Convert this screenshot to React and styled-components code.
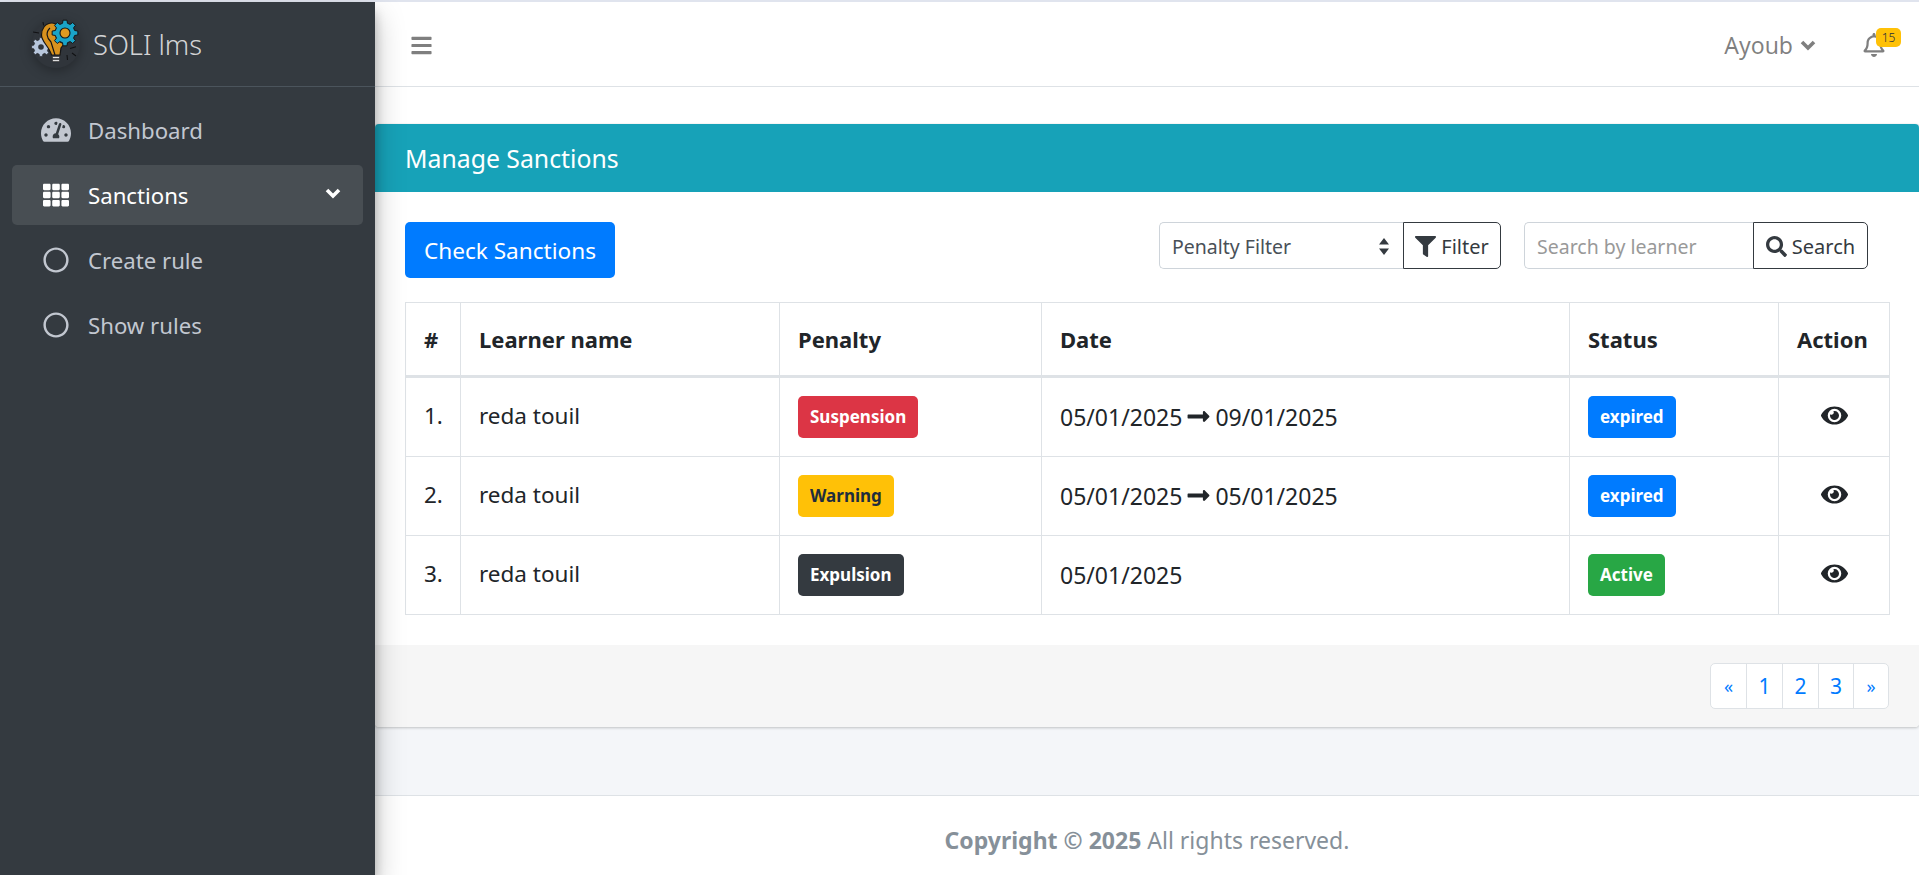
import React from 'react'
import styled, { createGlobalStyle } from 'styled-components'
import {
  FaTachometerAlt, FaTh, FaRegCircle, FaBars, FaRegBell,
  FaFilter, FaSearch, FaEye, FaLongArrowAltRight,
} from 'react-icons/fa'

const Global = createGlobalStyle`
  * { box-sizing: border-box; }
  html, body { margin: 0; padding: 0; height: 100%; }
  body {
    font-family: "Noto Sans", "Open Sans", sans-serif;
    font-size: 21px;
    color: #212529;
    background: #f4f6f9;
    overflow: hidden;
  }
`

const Shell = styled.div`
  display: flex;
  height: 875px;
  padding-top: 2px;
  background: #e0e4ee;
`
const Sidebar = styled.aside`
  width: 375px;
  flex: none;
  background: #343a40;
  box-shadow: 0 14px 28px rgba(0,0,0,.25), 0 10px 10px rgba(0,0,0,.22);
  z-index: 2;
`
const Brand = styled.div`
  height: 85px;
  display: flex;
  align-items: center;
  padding-left: 20px;
  gap: 3px;
  border-bottom: 1px solid #4b545c;
  color: rgba(255,255,255,.8);
  font-size: 27.3px;
  font-weight: 300;
`
const LogoSvg = styled.svg`
  flex: none;
  margin-top: 1px;
  filter: drop-shadow(0 3px 6px rgba(0,0,0,.3));
`
const Nav = styled.nav`
  padding: 13px 12px 0;
  display: flex;
  flex-direction: column;
  gap: 5px;
`
const NavItem = styled.div`
  height: 60px;
  display: flex;
  align-items: center;
  padding: 0 22px 0 28px;
  border-radius: 5px;
  font-size: 22.2px;
  color: ${(p) => (p.$active ? '#fff' : '#c2c7d0')};
  background: ${(p) => (p.$active ? 'rgba(255,255,255,.1)' : 'transparent')};
  svg { flex: none; }
`
const NavIcon = styled.span`
  width: 28px;
  margin: 0 18px 0 2px;
  display: flex;
  justify-content: center;
  font-size: ${(p) => p.$size || 26}px;
`
const Chevron = styled.svg`
  width: 16px;
  height: 12px;
  fill: none;
  stroke: currentColor;
  stroke-width: 3.6;
  margin-left: ${(p) => (p.$end ? 'auto' : '0')};
  margin-top: ${(p) => (p.$end ? '-4px' : '0')};
`

const Main = styled.div`
  flex: 1;
  display: flex;
  flex-direction: column;
  min-width: 0;
`
const Topbar = styled.header`
  height: 85px;
  flex: none;
  display: flex;
  align-items: center;
  background: #fff;
  border-bottom: 1px solid #dee2e6;
  padding: 2px 18px 0 35px;
  color: rgba(0,0,0,.5);
`
const Burger = styled.span`
  display: flex;
  font-size: 23px;
`
const UserMenu = styled.div`
  margin-left: auto;
  display: flex;
  align-items: center;
  gap: 7px;
  font-size: 23px;
`
const BellWrap = styled.div`
  position: relative;
  margin-left: 46px;
  width: 39px;
  height: 24px;
  font-size: 24px;
  svg { display: block; }
`
const Count = styled.span`
  position: absolute;
  top: -5px;
  left: 14px;
  width: 25px;
  height: 19px;
  border-radius: 5px;
  background: #ffc107;
  color: #1f2d3d;
  font-size: 12px;
  font-weight: 300;
  text-align: center;
  line-height: 19px;
`
const Spacer = styled.div`
  height: 37px;
  flex: none;
  background: #fff;
`
const Content = styled.main`
  flex: 1;
  background: #f4f6f9;
`
const Card = styled.section`
  background: #fff;
  border-radius: 4px;
  box-shadow: 0 0 1px rgba(0,0,0,.125), 0 1px 3px rgba(0,0,0,.2);
`
const CardHead = styled.div`
  height: 68px;
  display: flex;
  align-items: center;
  padding-left: 30px;
  background: #17a2b8;
  color: #fff;
  font-size: 24.8px;
  border-radius: 4px 4px 0 0;
`
const CardBody = styled.div`
  padding: 30px;
`
const Tools = styled.div`
  display: flex;
  align-items: flex-start;
  height: 56px;
  margin-bottom: 24px;
`
const Primary = styled.button`
  height: 56px;
  width: 210px;
  padding: 1px 0 0;
  border: 0;
  border-radius: 5px;
  background: #007bff;
  color: #fff;
  font: inherit;
  font-size: 22.6px;
`
const Group = styled.div`
  display: flex;
  height: 47px;
  margin-left: ${(p) => p.$gap || 0}px;
`
const FieldBox = styled.div`
  width: ${(p) => p.$w}px;
  display: flex;
  align-items: center;
  justify-content: space-between;
  padding: 1px 13px 0 12px;
  border: 1px solid #ced4da;
  border-right: 0;
  border-radius: 5px 0 0 5px;
  font-size: 19.5px;
  color: ${(p) => (p.$muted ? '#999' : '#495057')};
`
const Carets = styled.svg`
  width: 12px;
  height: 17px;
  fill: #343a40;
`
const OutlineBtn = styled.button`
  width: ${(p) => p.$w}px;
  display: flex;
  align-items: center;
  justify-content: center;
  gap: 5px;
  padding: 1px 0 0;
  background: #fff;
  border: 1px solid #343a40;
  border-radius: 0 5px 5px 0;
  color: #343a40;
  font: inherit;
  font-size: 20px;
  svg { font-size: 21px; }
`
const Table = styled.table`
  width: 1484px;
  table-layout: fixed;
  border-collapse: collapse;
  font-size: 22.5px;
  th, td {
    border: 1px solid #dee2e6;
    padding: 0 18px;
    text-align: left;
    vertical-align: middle;
  }
  th {
    height: 74px;
    font-size: 22px;
    font-weight: 700;
    border-bottom-width: 3px;
    color: #212529;
  }
  td { height: 79px; }
  tbody tr:first-child td { height: 80px; }
`
const Center = styled.span`
  display: flex;
  justify-content: center;
  font-size: 27px;
  margin-top: -4px;
`
const Badge = styled.span`
  display: inline-block;
  height: 42px;
  line-height: 42px;
  padding: 0 12px;
  border-radius: 5px;
  font-size: 17px;
  font-weight: 700;
  color: ${(p) => (p.$dark ? '#1f2d3d' : '#fff')};
  background: ${(p) => p.$bg};
`
const Cell = styled.span`
  display: block;
  margin-top: -3px;
`
const DateText = styled.span`
  display: inline-flex;
  align-items: center;
  gap: 4px;
  font-size: 23px;
  margin-top: -5px;
  svg { font-size: 25px; }
`
const CardFoot = styled.div`
  height: 82px;
  display: flex;
  align-items: center;
  justify-content: flex-end;
  padding: 0 30px;
  background: #f6f6f6;
  border-radius: 0 0 4px 4px;
`
const Pager = styled.div`
  display: flex;
  height: 46px;
  background: #fff;
  border: 1px solid #dee2e6;
  border-radius: 5px;
`
const PageLink = styled.a`
  width: ${(p) => p.$w}px;
  display: flex;
  align-items: center;
  justify-content: center;
  color: #007bff;
  font-size: ${(p) => (p.$arrow ? 18 : 21)}px;
  & + & { border-left: 1px solid #dee2e6; }
`
const Footer = styled.footer`
  height: 80px;
  flex: none;
  display: flex;
  align-items: center;
  justify-content: center;
  padding-top: 8px;
  background: #fff;
  border-top: 1px solid #dee2e6;
  color: #869099;
  font-size: 23px;
  b { margin-right: 6px; }
`

// cog outline, used twice in the logo
const gearPath = (cx, cy, outer, inner, teeth) => {
  const pts = []
  for (let i = 0; i < teeth; i++) {
    const a = (i / teeth) * Math.PI * 2
    const w = (Math.PI / teeth) * 0.55
    const t = w * 0.7
    pts.push([a - w * 1.15, inner], [a - t, outer], [a + t, outer], [a + w * 1.15, inner])
  }
  const d = pts.map(([a, r]) => `${(cx + r * Math.cos(a)).toFixed(2)} ${(cy + r * Math.sin(a)).toFixed(2)}`)
  return `M${d.join('L')}Z`
}

const Logo = () => (
  <LogoSvg width="70" height="70" viewBox="0 0 70 70">
    <circle cx="36" cy="34" r="24" fill="#30353b" />
    <path d={gearPath(21, 37, 9.5, 7.4, 8)} fill="#b7c6dc" stroke="#1b1d20" strokeWidth=".6" />
    <circle cx="21" cy="37" r="2.8" fill="#30353b" />
    <path d="M32 13C25 13 21.5 19 21.5 25C21.5 32 29 36 31.5 45H40L41 38L44 34L37 30L35 22L38 15C36 14 34 13 32 13Z" fill="#d8921e" stroke="#141517" strokeWidth="1.2" />
    <path d="M30 18C25.5 22 26.5 28 31 32L35 45" fill="none" stroke="#141517" strokeWidth="1.2" />
    <path d="M32.5 46.5H39.5V48.6H32.5ZM32.5 49.6H39.5V51.6H32.5Z" fill="#e8e8e8" stroke="#141517" strokeWidth=".5" />
    <path d={gearPath(45, 23, 13, 10, 8)} fill="#1aa4c8" stroke="#141517" strokeWidth="1" />
    <circle cx="45" cy="23" r="5" fill="#e09a20" stroke="#141517" strokeWidth="1.1" />
    <path d="M13 22L19 23M23 12L23.6 15.5M50 38.5L56 36.7M52 43L56 46M47 45L47.5 50" stroke="#111214" strokeWidth="1.1" />
  </LogoSvg>
)

const Down = ({ end }) => (
  <Chevron $end={end} viewBox="0 0 16 12"><path d="M2 3l6 6 6-6" /></Chevron>
)

const rows = [
  { n: '1.', penalty: 'Suspension', bg: '#dc3545', from: '05/01/2025', to: '09/01/2025', status: 'expired', sbg: '#007bff' },
  { n: '2.', penalty: 'Warning', bg: '#ffc107', dark: true, from: '05/01/2025', to: '05/01/2025', status: 'expired', sbg: '#007bff' },
  { n: '3.', penalty: 'Expulsion', bg: '#343a40', from: '05/01/2025', status: 'Active', sbg: '#28a745' },
]

export default function App() {
  return (
    <>
      <Global />
      <Shell>
        <Sidebar>
          <Brand><Logo />SOLI lms</Brand>
          <Nav>
            <NavItem><NavIcon $size={30}><FaTachometerAlt /></NavIcon>Dashboard</NavItem>
            <NavItem $active><NavIcon><FaTh /></NavIcon>Sanctions<Down end /></NavItem>
            <NavItem><NavIcon><FaRegCircle /></NavIcon>Create rule</NavItem>
            <NavItem><NavIcon><FaRegCircle /></NavIcon>Show rules</NavItem>
          </Nav>
        </Sidebar>
        <Main>
          <Topbar>
            <Burger><FaBars /></Burger>
            <UserMenu>Ayoub <Down /></UserMenu>
            <BellWrap><FaRegBell /><Count>15</Count></BellWrap>
          </Topbar>
          <Spacer />
          <Content>
            <Card>
              <CardHead>Manage Sanctions</CardHead>
              <CardBody>
                <Tools>
                  <Primary>Check Sanctions</Primary>
                  <Group $gap={544}>
                    <FieldBox $w={244}>Penalty Filter
                      <Carets viewBox="0 0 12 17"><path d="M6 0l5 6.5H1zM6 17l-5-6.5h10z" /></Carets>
                    </FieldBox>
                    <OutlineBtn $w={98}><FaFilter />Filter</OutlineBtn>
                  </Group>
                  <Group $gap={23}>
                    <FieldBox $w={229} $muted>Search by learner</FieldBox>
                    <OutlineBtn $w={115}><FaSearch />Search</OutlineBtn>
                  </Group>
                </Tools>
                <Table>
                  <colgroup>
                    <col width="55" /><col width="319" /><col width="262" /><col width="528" /><col width="209" /><col width="111" />
                  </colgroup>
                  <thead>
                    <tr><th>#</th><th>Learner name</th><th>Penalty</th><th>Date</th><th>Status</th><th>Action</th></tr>
                  </thead>
                  <tbody>
                    {rows.map((r) => (
                      <tr key={r.n}>
                        <td><Cell>{r.n}</Cell></td>
                        <td><Cell>reda touil</Cell></td>
                        <td><Badge $bg={r.bg} $dark={r.dark}>{r.penalty}</Badge></td>
                        <td><DateText>{r.from}{r.to && <><FaLongArrowAltRight />{r.to}</>}</DateText></td>
                        <td><Badge $bg={r.sbg}>{r.status}</Badge></td>
                        <td><Center><FaEye /></Center></td>
                      </tr>
                    ))}
                  </tbody>
                </Table>
              </CardBody>
              <CardFoot>
                <Pager>
                  <PageLink $w={35} $arrow>«</PageLink>
                  <PageLink $w={36}>1</PageLink>
                  <PageLink $w={36}>2</PageLink>
                  <PageLink $w={35}>3</PageLink>
                  <PageLink $w={35} $arrow>»</PageLink>
                </Pager>
              </CardFoot>
            </Card>
          </Content>
          <Footer><b>Copyright © 2025</b> All rights reserved.</Footer>
        </Main>
      </Shell>
    </>
  )
}
